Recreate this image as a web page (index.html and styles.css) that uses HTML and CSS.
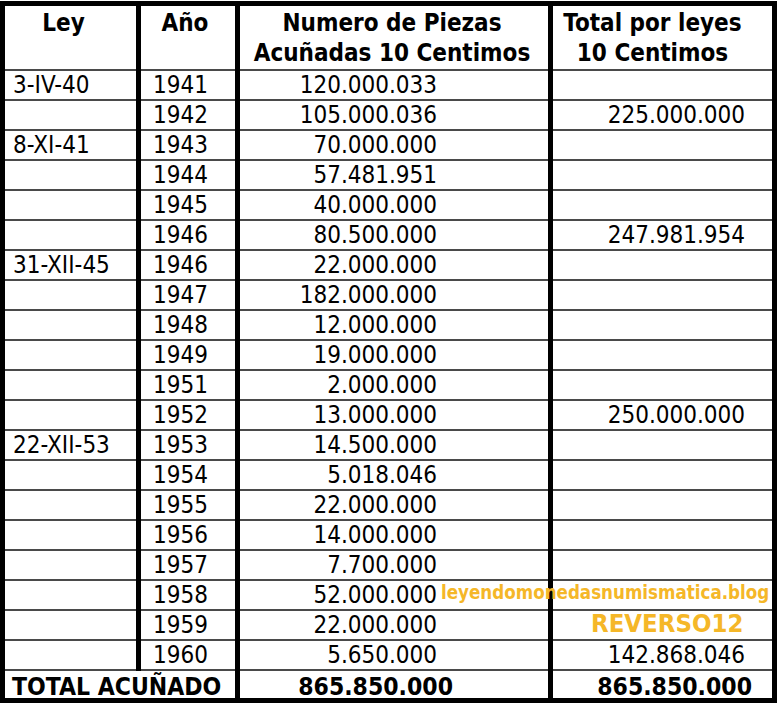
FILE: index.html
```html
<!DOCTYPE html>
<html lang="es">
<head>
<meta charset="utf-8">
<title>Piezas acuñadas 10 Centimos</title>
<link rel="stylesheet" href="styles.css">
</head>
<body>
<div class="sheet">
  <div class="hd hd-ley">Ley</div>
  <div class="hd hd-ano">Año</div>
  <div class="hd hd-num">Numero de Piezas<br>Acuñadas 10 Centimos</div>
  <div class="hd hd-tot">Total por leyes<br>10 Centimos</div>

  <div class="c ley">3-IV-40</div><div class="c ano">1941</div><div class="c num">120.000.033</div><div class="c tot"></div>
  <div class="c ley"></div><div class="c ano">1942</div><div class="c num">105.000.036</div><div class="c tot">225.000.000</div>
  <div class="c ley">8-XI-41</div><div class="c ano">1943</div><div class="c num">70.000.000</div><div class="c tot"></div>
  <div class="c ley"></div><div class="c ano">1944</div><div class="c num">57.481.951</div><div class="c tot"></div>
  <div class="c ley"></div><div class="c ano">1945</div><div class="c num">40.000.000</div><div class="c tot"></div>
  <div class="c ley"></div><div class="c ano">1946</div><div class="c num">80.500.000</div><div class="c tot">247.981.954</div>
  <div class="c ley">31-XII-45</div><div class="c ano">1946</div><div class="c num">22.000.000</div><div class="c tot"></div>
  <div class="c ley"></div><div class="c ano">1947</div><div class="c num">182.000.000</div><div class="c tot"></div>
  <div class="c ley"></div><div class="c ano">1948</div><div class="c num">12.000.000</div><div class="c tot"></div>
  <div class="c ley"></div><div class="c ano">1949</div><div class="c num">19.000.000</div><div class="c tot"></div>
  <div class="c ley"></div><div class="c ano">1951</div><div class="c num">2.000.000</div><div class="c tot"></div>
  <div class="c ley"></div><div class="c ano">1952</div><div class="c num">13.000.000</div><div class="c tot">250.000.000</div>
  <div class="c ley">22-XII-53</div><div class="c ano">1953</div><div class="c num">14.500.000</div><div class="c tot"></div>
  <div class="c ley"></div><div class="c ano">1954</div><div class="c num">5.018.046</div><div class="c tot"></div>
  <div class="c ley"></div><div class="c ano">1955</div><div class="c num">22.000.000</div><div class="c tot"></div>
  <div class="c ley"></div><div class="c ano">1956</div><div class="c num">14.000.000</div><div class="c tot"></div>
  <div class="c ley"></div><div class="c ano">1957</div><div class="c num">7.700.000</div><div class="c tot"></div>
  <div class="c ley"></div><div class="c ano">1958</div><div class="c num">52.000.000</div><div class="c tot"></div>
  <div class="c ley"></div><div class="c ano">1959</div><div class="c num">22.000.000</div><div class="c tot"></div>
  <div class="c ley"></div><div class="c ano">1960</div><div class="c num">5.650.000</div><div class="c tot">142.868.046</div>

  <div class="ft ft-label">TOTAL ACUÑADO</div>
  <div class="ft ft-num">865.850.000</div>
  <div class="ft ft-tot">865.850.000</div>

  <div class="wm wm-site">leyendomonedasnumismatica.blog</div>
  <div class="wm wm-code">REVERSO12</div>
</div>
</body>
</html>
```
FILE: styles.css
```css
html, body {
  margin: 0;
  padding: 0;
  background: #fff;
}

.sheet {
  position: relative;
  margin-top: 1px;
  width: 767px;
  display: grid;
  grid-template-columns: 131px 94px 308px 219px;
  grid-template-rows: 65px repeat(20, 30px) 27px;
  column-gap: 5px;
  background: #000;
  border: 5px solid #000;
  font-family: "DejaVu Sans Condensed", "DejaVu Sans", sans-serif;
  color: #000;
}

.hd, .c, .ft {
  background: #fff;
  box-sizing: border-box;
  white-space: nowrap;
}

.hd, .c {
  border-bottom: 2px solid #4a4a4a;
}

.hd {
  font-weight: bold;
  font-size: 24px;
  line-height: 30px;
  padding-top: 2px;
  text-align: center;
}

.hd-ley { padding-right: 14px; }
.hd-ano { padding-right: 6px; }
.hd-num { padding-right: 4px; }
.hd-tot { padding-right: 20px; }

.c {
  font-size: 24px;
  line-height: 28px;
}

.ley { padding-left: 8px; }
.ano { padding-left: 12px; }
.num { text-align: right; padding-right: 111px; }
.tot { text-align: right; padding-right: 27px; }

.ft {
  font-weight: bold;
  font-size: 24.5px;
  line-height: 25px;
  padding-top: 3px;
}

.ft-label {
  grid-column: span 2;
  padding-left: 7px;
}

.ft-num { text-align: right; padding-right: 95px; }
.ft-tot { text-align: right; padding-right: 20px; }

.wm {
  position: absolute;
  font-weight: bold;
  color: #f5b728;
  line-height: 1;
  white-space: nowrap;
}

.wm-site {
  left: 436px;
  top: 578px;
  font-size: 18.6px;
}

.wm-code {
  left: 586px;
  top: 605px;
  font-size: 25.5px;
}
```
